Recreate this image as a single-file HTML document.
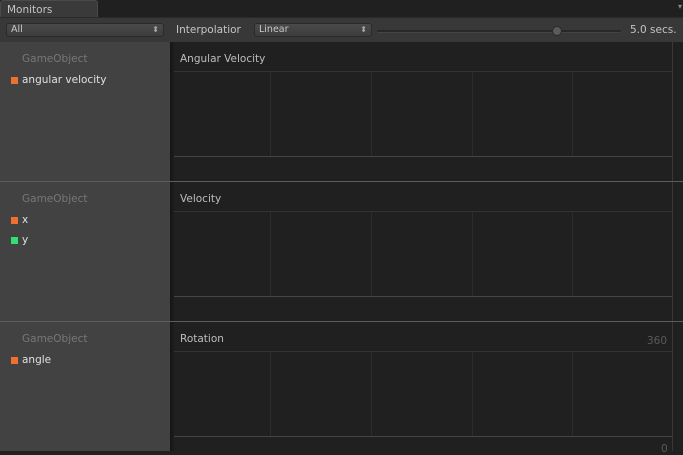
<!DOCTYPE html>
<html><head><style>
*{margin:0;padding:0;box-sizing:border-box}
body{width:683px;height:451px;overflow:hidden;background:#202020;font-family:"DejaVu Sans","Liberation Sans",sans-serif;font-size:10.5px;position:relative}
.a{position:absolute}
.tab{left:0;top:0;width:98px;height:18px;background:#3a3a3a;border:1px solid #4a4a4a;border-bottom:none;border-radius:3px 3px 0 0;color:#c4c4c4;padding:3px 0 0 6px}
.tb{left:0;top:17px;width:683px;height:25px;background:#383838;border-top:1px solid #2a2a2a}
.dd{height:14px;background:linear-gradient(#4a4a4a,#3c3c3c);border:1px solid #2a2a2a;border-radius:3px;color:#c8c8c8;font-size:9.5px;padding:0 0 0 4px;line-height:12px}
.dd span{position:absolute;right:4px;top:0;font-size:8px;color:#aaa}
.left{left:0;top:42px;width:170px;height:409px;background:#424242}
.sh{left:170px;top:42px;width:5px;height:409px;background:linear-gradient(90deg,#151515,#202020)}
.go{color:#777}
.lb{color:#e0e0e0}
.sq{width:7px;height:7px}
.t{color:#bdbdbd}
.hl{height:1px;background:#333;left:174px;width:498px}
.vl{width:1px;background:#2c2c2c}
.div{left:0;width:683px;height:1px;background:#5c5c5c}
</style></head><body>
<div class="a tab">Monitors</div>
<div class="a" style="left:678px;top:2px;color:#888;font-size:8px">▾</div>
<div class="a tb"></div>
<div class="a dd" style="left:6px;top:23px;width:158px">All<span>⬍</span></div>
<div class="a" style="left:176px;top:24px;color:#c4c4c4">Interpolatior</div>
<div class="a dd" style="left:254px;top:23px;width:118px">Linear<span>⬍</span></div>
<div class="a" style="left:377px;top:30px;width:244px;height:3px;background:#282828;border-radius:2px;border-bottom:1px solid #444"></div>
<div class="a" style="left:552px;top:26px;width:10px;height:10px;border-radius:50%;background:#5a5a5a;border:1px solid #2a2a2a"></div>
<div class="a" style="left:630px;top:24px;color:#c4c4c4">5.0 secs.</div>
<div class="a left"></div>
<div class="a sh"></div>
<div class="a" style="left:672px;top:42px;width:1px;height:409px;background:#383838"></div>

<div class="a go" style="left:22px;top:53px">GameObject</div>
<div class="a sq" style="left:11px;top:77px;background:#f07030"></div>
<div class="a lb" style="left:22px;top:74px">angular velocity</div>
<div class="a t" style="left:180px;top:53px">Angular Velocity</div>
<div class="a hl" style="top:71px"></div>
<div class="a hl" style="top:156px;background:#464646"></div>
<div class="a vl" style="left:270px;top:72px;height:84px"></div>
<div class="a vl" style="left:371px;top:72px;height:84px"></div>
<div class="a vl" style="left:472px;top:72px;height:84px"></div>
<div class="a vl" style="left:572px;top:72px;height:84px"></div>
<div class="a div" style="top:181px"></div>

<div class="a go" style="left:22px;top:193px">GameObject</div>
<div class="a sq" style="left:11px;top:217px;background:#f07030"></div>
<div class="a lb" style="left:22px;top:214px">x</div>
<div class="a sq" style="left:11px;top:237px;background:#30e070"></div>
<div class="a lb" style="left:22px;top:234px">y</div>
<div class="a t" style="left:180px;top:193px">Velocity</div>
<div class="a hl" style="top:211px"></div>
<div class="a hl" style="top:296px;background:#464646"></div>
<div class="a vl" style="left:270px;top:212px;height:84px"></div>
<div class="a vl" style="left:371px;top:212px;height:84px"></div>
<div class="a vl" style="left:472px;top:212px;height:84px"></div>
<div class="a vl" style="left:572px;top:212px;height:84px"></div>
<div class="a div" style="top:321px"></div>

<div class="a go" style="left:22px;top:333px">GameObject</div>
<div class="a sq" style="left:11px;top:357px;background:#f07030"></div>
<div class="a lb" style="left:22px;top:354px">angle</div>
<div class="a t" style="left:180px;top:333px">Rotation</div>
<div class="a" style="left:647px;top:335px;color:#5a5a5a">360</div>
<div class="a hl" style="top:351px"></div>
<div class="a hl" style="top:436px;background:#464646"></div>
<div class="a vl" style="left:270px;top:352px;height:84px"></div>
<div class="a vl" style="left:371px;top:352px;height:84px"></div>
<div class="a vl" style="left:472px;top:352px;height:84px"></div>
<div class="a vl" style="left:572px;top:352px;height:84px"></div>
<div class="a" style="left:661px;top:443px;color:#5a5a5a">0</div>
</body></html>
